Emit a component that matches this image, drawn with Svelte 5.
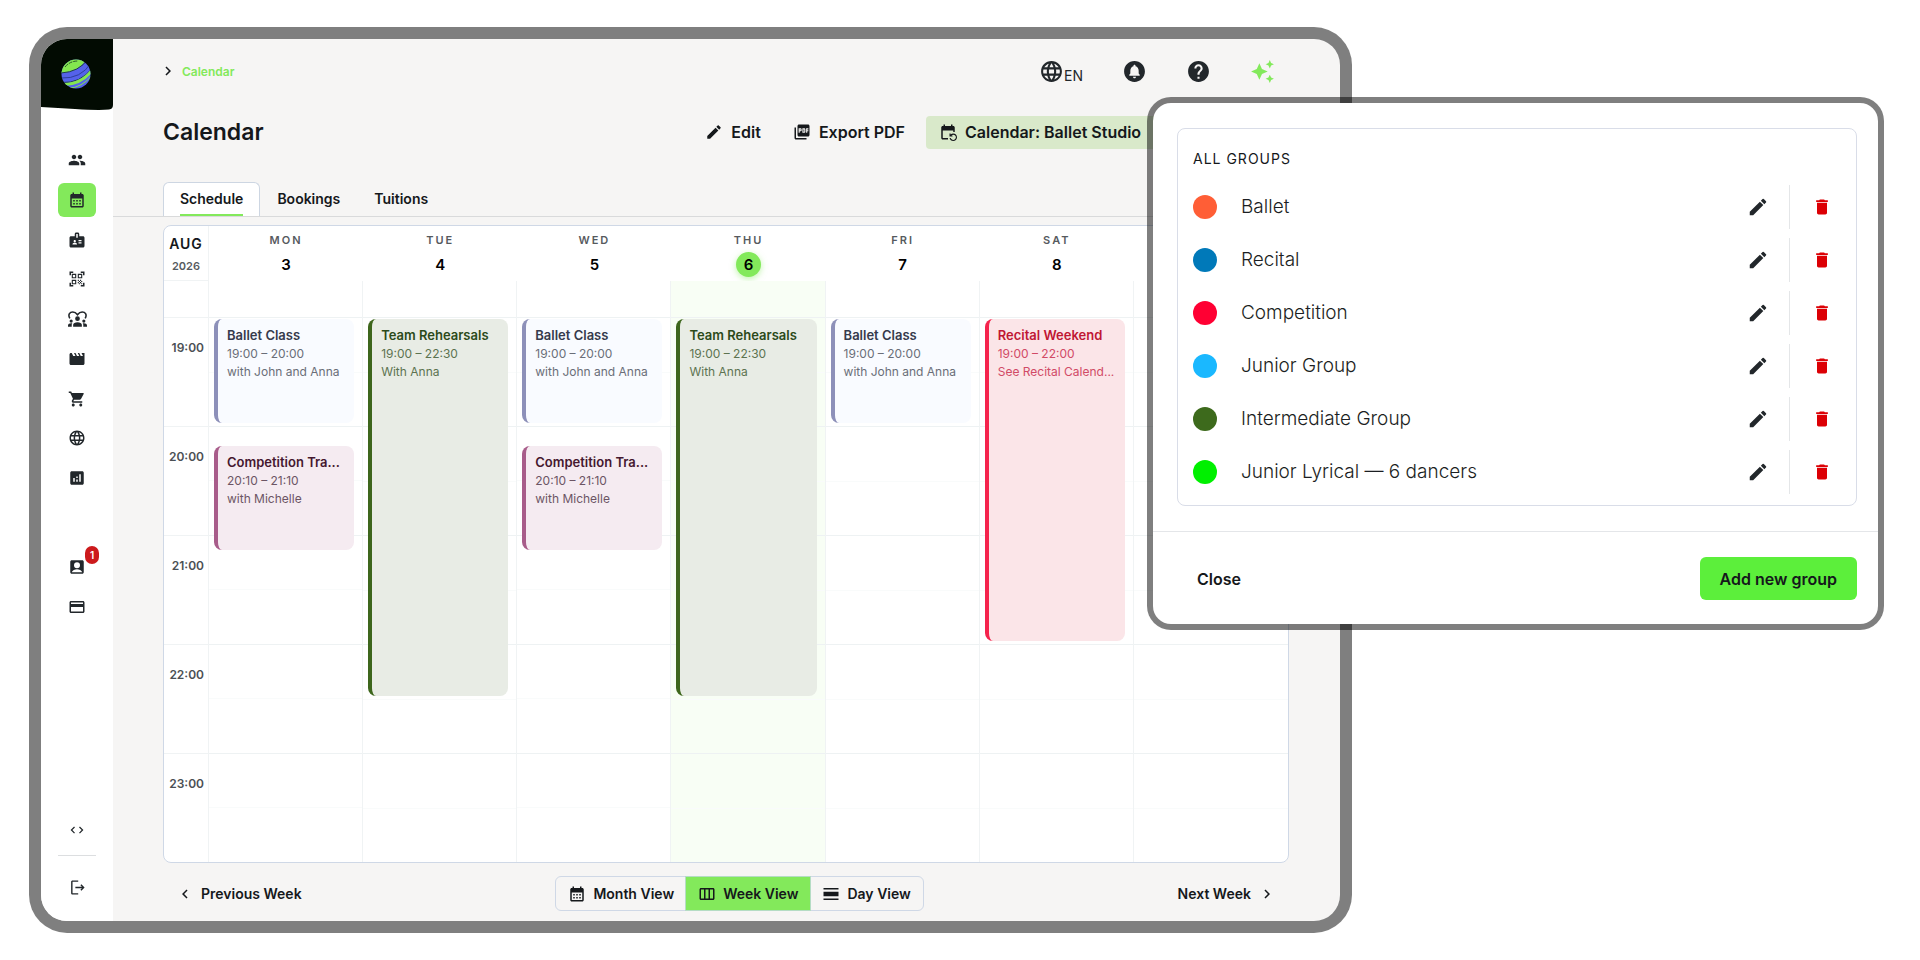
<script>
  const icons = {
    people: 'M16 11c1.66 0 2.99-1.34 2.99-3S17.66 5 16 5s-3 1.34-3 3 1.34 3 3 3zm-8 0c1.66 0 2.99-1.34 2.99-3S9.66 5 8 5 5 6.34 5 8s1.34 3 3 3zm0 2c-2.33 0-7 1.17-7 3.5V19h14v-2.5c0-2.33-4.67-3.5-7-3.5zm8 0c-.29 0-.62.02-.97.05 1.16.84 1.97 1.97 1.97 3.45V19h6v-2.5c0-2.33-4.67-3.5-7-3.5z',
    calendar: 'M19 4h-1V2h-2v2H8V2H6v2H5c-1.11 0-1.99.9-1.99 2L3 20c0 1.1.89 2 2 2h14c1.1 0 2-.9 2-2V6c0-1.1-.9-2-2-2zm0 16H5V10h14v10zM9 14H7v-2h2v2zm4 0h-2v-2h2v2zm4 0h-2v-2h2v2zm-8 4H7v-2h2v2zm4 0h-2v-2h2v2zm4 0h-2v-2h2v2z',
    badge: 'M20 7h-5V4c0-1.1-.9-2-2-2h-2c-1.1 0-2 .9-2 2v3H4c-1.1 0-2 .9-2 2v11c0 1.1.9 2 2 2h16c1.1 0 2-.9 2-2V9c0-1.1-.9-2-2-2zM9 12c.83 0 1.5.67 1.5 1.5S9.83 15 9 15s-1.5-.67-1.5-1.5S8.17 12 9 12zm3 6H6v-.75c0-1 2-1.5 3-1.5s3 .5 3 1.5V18zm1-9h-2V4h2v5zm5 7.5h-4V15h4v1.5zm0-3h-4V12h4v1.5z',
    qr: 'M9.5 6.5v3h-3v-3h3M11 5H5v6h6V5zm-1.5 9.5v3h-3v-3h3M11 13H5v6h6v-6zm6.5-6.5v3h-3v-3h3M19 5h-6v6h6V5zm-6 8h1.5v1.5H13V13zm1.5 1.5H16V16h-1.5v-1.5zM16 13h1.5v1.5H16V13zm-3 3h1.5v1.5H13V16zm1.5 1.5H16V19h-1.5v-1.5zM16 16h1.5v1.5H16V16zm1.5-1.5H19V16h-1.5v-1.5zm0 3H19V19h-1.5v-1.5zM22 7h-2V4h-3V2h5v5zm0 15v-5h-2v3h-3v2h5zM2 22h5v-2H4v-3H2v5zM2 2v5h2V4h3V2H2z',
    movie: 'M18 4l2 4h-3l-2-4h-2l2 4h-3l-2-4H8l2 4H7L5 4H4c-1.1 0-1.99.9-1.99 2L2 18c0 1.1.9 2 2 2h16c1.1 0 2-.9 2-2V4h-4z',
    cart: 'M7 18c-1.1 0-1.99.9-1.99 2S5.9 22 7 22s2-.9 2-2-.9-2-2-2zM1 2v2h2l3.6 7.59-1.35 2.45c-.16.28-.25.61-.25.96 0 1.1.9 2 2 2h12v-2H7.42c-.14 0-.25-.11-.25-.25l.03-.12.9-1.63h7.45c.75 0 1.41-.41 1.75-1.03l3.58-6.49A1.003 1.003 0 0 0 20 4H5.21l-.94-2H1zm16 16c-1.1 0-1.99.9-1.99 2s.89 2 1.99 2 2-.9 2-2-.9-2-2-2z',
    globe: 'M11.99 2C6.47 2 2 6.48 2 12s4.47 10 9.99 10C17.52 22 22 17.52 22 12S17.52 2 11.99 2zm6.93 6h-2.95c-.32-1.25-.78-2.45-1.38-3.56 1.84.63 3.37 1.91 4.33 3.56zM12 4.04c.83 1.2 1.48 2.53 1.91 3.96h-3.82c.43-1.43 1.08-2.76 1.91-3.96zM4.26 14C4.1 13.36 4 12.69 4 12s.1-1.36.26-2h3.38c-.08.66-.14 1.32-.14 2 0 .68.06 1.34.14 2H4.26zm.82 2h2.95c.32 1.25.78 2.45 1.38 3.56-1.84-.63-3.37-1.9-4.33-3.56zm2.95-8H5.08c.96-1.66 2.49-2.93 4.33-3.56C8.81 5.55 8.35 6.75 8.03 8zM12 19.96c-.83-1.2-1.48-2.53-1.91-3.96h3.82c-.43 1.43-1.08 2.76-1.91 3.96zM14.34 14H9.66c-.09-.66-.16-1.32-.16-2 0-.68.07-1.35.16-2h4.68c.09.65.16 1.32.16 2 0 .68-.07 1.34-.16 2zm.25 5.56c.6-1.11 1.06-2.31 1.38-3.56h2.95c-.96 1.65-2.49 2.93-4.33 3.56zM16.36 14c.08-.66.14-1.32.14-2 0-.68-.06-1.34-.14-2h3.38c.16.64.26 1.31.26 2s-.1 1.36-.26 2h-3.38z',
    stats: 'M19 3H5c-1.1 0-2 .9-2 2v14c0 1.1.9 2 2 2h14c1.1 0 2-.9 2-2V5c0-1.1-.9-2-2-2zM9 17H7v-5h2v5zm4 0h-2v-3h2v3zm0-5h-2v-2h2v2zm4 5h-2V7h2v10z',
    account: 'M3 5v14c0 1.1.9 2 2 2h14c1.1 0 2-.9 2-2V5c0-1.1-.9-2-2-2H5c-1.1 0-2 .9-2 2zm13 4.5a4 4 0 1 1-8 0 4 4 0 0 1 8 0zM5 19c1-2.5 4-4 7-4s6 1.5 7 4z',
    card: 'M20 4H4c-1.11 0-1.99.89-1.99 2L2 18c0 1.11.89 2 2 2h16c1.11 0 2-.89 2-2V6c0-1.11-.89-2-2-2zm0 14H4v-6h16v6zm0-10H4V6h16v2z',
    bell: 'M12 2C6.48 2 2 6.48 2 12s4.48 10 10 10 10-4.48 10-10S17.52 2 12 2zm0 16.5c-.83 0-1.5-.67-1.5-1.5h3c0 .83-.67 1.5-1.5 1.5zm5-2.5H7v-1l1-1v-2.61C8 9.27 9.03 7.47 11 7v-.5c0-.57.43-1 1-1s1 .43 1 1V7c1.97.47 3 2.28 3 4.39V14l1 1v1z',
    help: 'M12 2C6.48 2 2 6.48 2 12s4.48 10 10 10 10-4.48 10-10S17.52 2 12 2zm1 17h-2v-2h2v2zm2.07-7.75l-.9.92C13.45 12.9 13 13.5 13 15h-2v-.5c0-1.1.45-2.1 1.17-2.83l1.24-1.26c.37-.36.59-.86.59-1.41 0-1.1-.9-2-2-2s-2 .9-2 2H8c0-2.21 1.79-4 4-4s4 1.79 4 4c0 .88-.36 1.68-.93 2.25z',
    sparkle: 'M19 9l1.25-2.75L23 5l-2.75-1.25L19 1l-1.25 2.75L15 5l2.75 1.25L19 9zm-7.5.5L9 4 6.5 9.5 1 12l5.5 2.5L9 20l2.5-5.5L17 12l-5.5-2.5zM19 15l-1.25 2.75L15 19l2.75 1.25L19 23l1.25-2.75L23 19l-2.75-1.25L19 15z',
    edit: 'M3 17.25V21h3.75L17.81 9.94l-3.75-3.75L3 17.25zM20.71 7.04a1 1 0 0 0 0-1.41l-2.34-2.34a1 1 0 0 0-1.41 0l-1.83 1.83 3.75 3.75 1.83-1.83z',
    pdf: 'M20 2H8c-1.1 0-2 .9-2 2v12c0 1.1.9 2 2 2h12c1.1 0 2-.9 2-2V4c0-1.1-.9-2-2-2zm-8.5 7.5c0 .83-.67 1.5-1.5 1.5H9v2H7.5V7H10c.83 0 1.5.67 1.5 1.5v1zm5 2c0 .83-.67 1.5-1.5 1.5h-2.5V7H15c.83 0 1.5.67 1.5 1.5v3zm4-3H19v1h1.5V11H19v2h-1.5V7h3v1.5zM9 9.5h1v-1H9v1zM4 6H2v14c0 1.1.9 2 2 2h14v-2H4V6zm10 5.5h1v-3h-1v3z',
    repeat: 'M21 12V6c0-1.1-.9-2-2-2h-1V2h-2v2H8V2H6v2H5c-1.1 0-2 .9-2 2v14c0 1.1.9 2 2 2h7v-2H5V10h14v2h2zm-5.36 8c.43 1.45 1.77 2.5 3.36 2.5 1.93 0 3.5-1.57 3.5-3.5s-1.57-3.5-3.5-3.5c-.95 0-1.82.38-2.45 1H18V18h-4v-4h1.5v1.43c.9-.88 2.14-1.43 3.5-1.43 2.76 0 5 2.24 5 5s-2.24 5-5 5c-2.42 0-4.44-1.72-4.9-4h1.54z',
    trash: 'M6 19c0 1.1.9 2 2 2h8c1.1 0 2-.9 2-2V7H6v12zM19 4h-3.5l-1-1h-5l-1 1H5v2h14V4z',
    week: 'M4 4C2.9 4 2 4.9 2 6v12c0 1.1.9 2 2 2h16c1.1 0 2-.9 2-2V6c0-1.1-.9-2-2-2zM4 6h4v12H4zM10 6h4v12h-4zM16 6h4v12h-4z',
    day: 'M2 4h20v2H2zM2 9h20v6H2zM2 18h20v2H2z',
    code: 'M8.5 7.5 7 6l-6 6 6 6 1.5-1.5L4 12zM15.5 7.5 17 6l6 6-6 6-1.5-1.5L20 12z',
    logout: 'M5 2C3.9 2 3 2.9 3 4v16c0 1.1.9 2 2 2h8v-2H5V4h8V2zM17.5 7.5 16.1 8.9 18.2 11H9v2h9.2l-2.1 2.1 1.4 1.4L22 12z',
    left: 'M15.4 7.4 14 6l-6 6 6 6 1.4-1.4L10.8 12z',
    right: 'M10 6 8.6 7.4 13.2 12l-4.6 4.6L10 18l6-6z'
  };

  const nav = [
    ['Members', 'people'],
    ['Calendar', 'calendar'],
    ['Staff', 'badge'],
    ['Check-in', 'qr'],
    ['Community', 'family'],
    ['Videos', 'movie'],
    ['Shop', 'cart'],
    ['Website', 'globe'],
    ['Statistics', 'stats']
  ];

  // Slots are ten minutes long; row 1 is the strip above 19:00.
  const slot = (t) => {
    const [h, m] = t.split(':').map(Number);
    return (h - 19) * 6 + Math.round(m / 10) + 2;
  };

  const ballet = { kind: 'ballet', title: 'Ballet Class', from: '19:00', to: '20:00', note: 'with John and Anna' };
  const comp = { kind: 'comp', title: 'Competition Tra...', from: '20:10', to: '21:10', note: 'with Michelle' };
  const team = { kind: 'team', title: 'Team Rehearsals', from: '19:00', to: '22:30', note: 'With Anna' };
  const recital = { kind: 'recital', title: 'Recital Weekend', from: '19:00', to: '22:00', note: 'See Recital Calend...' };

  const days = [
    { name: 'MON', date: 3, events: [ballet, comp] },
    { name: 'TUE', date: 4, events: [team] },
    { name: 'WED', date: 5, events: [ballet, comp] },
    { name: 'THU', date: 6, today: true, events: [team] },
    { name: 'FRI', date: 7, events: [ballet] },
    { name: 'SAT', date: 8, events: [recital] },
    { name: '', date: '', events: [] }
  ];
  const hours = ['19:00', '20:00', '21:00', '22:00', '23:00'];

  const groups = [
    ['Ballet', '#ff5e36'],
    ['Recital', '#0079b9'],
    ['Competition', '#ff0033'],
    ['Junior Group', '#1ab8ff'],
    ['Intermediate Group', '#3d6a1c'],
    ['Junior Lyrical — 6 dancers', '#00f000']
  ];
</script>

{#snippet icon(name, size)}
  <svg class="icon" width={size} height={size} viewBox="0 0 24 24" aria-hidden="true">
    {#if name === 'family'}
      <path d="M2.3 10.5C-.5 5.5 2.500 2.500 6 2.500c2.500 0 4.500 1.500 6 3.500 1.500-2 3.500-3.500 6-3.500 3.500 0 6.500 3 3.700 8" fill="none" stroke="currentColor" stroke-width="2" />
      <circle cx="12" cy="11" r="3" /><circle cx="4" cy="14" r="2" /><circle cx="20" cy="14" r="2" />
      <path d="M6.5 21v-2.300c0-2 2.500-3.200 5.500-3.200s5.500 1.200 5.500 3.200V21zM0 21v-1.500c0-1.700 1.800-2.800 4-2.800.5 0 1 .1 1.400.2-.6.700-.7 1.300-.7 1.900V21zM24 21v-1.500c0-1.700-1.800-2.800-4-2.800-.5 0-1 .1-1.400.2.6.7.7 1.300.7 1.900V21z" />
    {:else}
      <path fill-rule="evenodd" d={icons[name]} />
    {/if}
  </svg>
{/snippet}

<div class="stage">
  <div class="device">
    <nav class="sidebar">
      <a class="logo" href="#home" aria-label="Home">
        <svg viewBox="0 0 72 71" width="72" height="71" aria-hidden="true">
          <defs><clipPath id="ball"><circle cx="34" cy="34" r="14.500" /></clipPath></defs>
          <path d="M0 0h72v66q0 4-4 4.500Q58 71.500 34 70L0 68z" fill="#020b02" />
          <g clip-path="url(#ball)" transform="translate(1 1)">
            <rect x="19" y="19" width="30" height="30" fill="#5562ea" />
            <path d="M18 33V18h27q-7 14-27 15z" fill="#84e64f" />
            <path d="M19 33q18-1 27-14" stroke="#1d3a4a" stroke-width="1" fill="none" />
            <path d="M19 38q20 1 30-15" stroke="#2d3f9a" stroke-width="1" fill="none" />
            <path d="M20 42.500q18 1 30-14" stroke="#1d3a4a" stroke-width="1" fill="none" />
            <path d="M22 44.500q17 0 28-14" stroke="#84e64f" stroke-width="3" fill="none" />
            <path d="M26 48.500q14-1 24-13" stroke="#84e64f" stroke-width="1" fill="none" />
            <path d="M23 27q5-6 13-6" stroke="#2b5a2b" stroke-width="1" fill="none" stroke-dasharray="4 1" />
          </g>
        </svg>
      </a>
      <div class="nav-main">
        {#each nav as [label, name]}
          <a class="nav-item" class:active={name === 'calendar'} href="#{name}" aria-label={label}>{@render icon(name, name === 'family' ? 19 : 18)}</a>
        {/each}
      </div>
      <div class="nav-extra">
        <a class="nav-item" href="#account" aria-label="Account">{@render icon('account', 18)}<span class="count">1</span></a>
        <a class="nav-item" href="#billing" aria-label="Billing">{@render icon('card', 18)}</a>
      </div>
      <a class="nav-item code" href="#embed" aria-label="Embed">{@render icon('code', 14)}</a>
      <hr />
      <button class="nav-item" aria-label="Log out">{@render icon('logout', 17)}</button>
    </nav>

    <main>
      <header class="topbar">
        <div class="crumb">{@render icon('right', 18)}<a href="#calendar">Calendar</a></div>
        <div class="tools">
          <button class="lang">{@render icon('globe', 25)}<span>EN</span></button>
          <button aria-label="Notifications">{@render icon('bell', 25)}</button>
          <button aria-label="Help">{@render icon('help', 25)}</button>
          <button class="spark" aria-label="Assistant">{@render icon('sparkle', 25)}</button>
        </div>
      </header>

      <div class="heading">
        <h1>Calendar</h1>
        <button>{@render icon('edit', 18)}Edit</button>
        <button>{@render icon('pdf', 18)}Export PDF</button>
        <button class="picker">{@render icon('repeat', 18)}Calendar: Ballet Studio</button>
      </div>

      <div class="tabs">
        <button class="tab selected"><span>Schedule</span></button>
        <button class="tab"><span>Bookings</span></button>
        <button class="tab"><span>Tuitions</span></button>
      </div>

      <section class="week">
        <div class="times">
          <div class="month"><b>AUG</b><span>2026</span></div>
          <div class="slots">
            {#each hours as h}
              <div class="hour" style="grid-row: {slot(h)} / span 6">{h}</div>
            {/each}
          </div>
        </div>
        {#each days as d}
          <div class="day" class:today={d.today}>
            <div class="day-head"><span>{d.name}</span><b>{d.date}</b></div>
            <div class="slots">
              {#each hours as h}
                <div class="cell" style="grid-row: {slot(h)} / span 6"></div>
              {/each}
              {#each d.events as e}
                <article class="event {e.kind}" style="grid-row: {slot(e.from)} / {slot(e.to)}">
                  <h3>{e.title}</h3>
                  <p>{e.from} – {e.to}</p>
                  <p>{e.note}</p>
                </article>
              {/each}
            </div>
          </div>
        {/each}
      </section>

      <footer class="pager">
        <button>{@render icon('left', 18)}Previous Week</button>
        <div class="views">
          <button>{@render icon('calendar', 18)}Month View</button>
          <button class="on">{@render icon('week', 18)}Week View</button>
          <button>{@render icon('day', 18)}Day View</button>
        </div>
        <button>Next Week{@render icon('right', 18)}</button>
      </footer>
    </main>
  </div>

  <section class="dialog" aria-labelledby="groups-title">
    <div class="groups">
      <h2 id="groups-title">ALL GROUPS</h2>
      <ul>
        {#each groups as [name, color]}
          <li>
            <i style="background: {color}"></i>
            <span>{name}</span>
            <button class="pen" aria-label="Edit {name}">{@render icon('edit', 22)}</button>
            <button class="bin" aria-label="Delete {name}">{@render icon('trash', 20)}</button>
          </li>
        {/each}
      </ul>
    </div>
    <div class="actions">
      <button class="close">Close</button>
      <button class="add">Add new group</button>
    </div>
  </section>
</div>

<style>
  :global(body) { background: #fff; }
  * { box-sizing: border-box; }
  .stage {
    display: grid;
    grid-template-columns: 29px 1118fr 205fr 532fr 36px;
    padding: 27px 0 28px;
    font-family: Inter, "Liberation Sans", sans-serif;
    color: #15181b;
  }
  h1, h2, h3, p, ul { margin: 0; padding: 0; }
  button { font: inherit; color: inherit; background: none; border: 0; padding: 0; cursor: pointer; }
  a { color: inherit; text-decoration: none; }
  .icon { display: block; flex: none; fill: currentColor; }

  .device {
    grid-area: 1 / 2 / 2 / 4;
    display: flex;
    border: 12px solid rgba(0, 0, 0, 0.5);
    border-radius: 38px;
    background: #f6f5f4;
    background-clip: padding-box;
    overflow: hidden;
  }
  .sidebar {
    width: 72px;
    flex: none;
    display: flex;
    flex-direction: column;
    align-items: center;
    padding-bottom: 17px;
    background: #fff;
    color: #22272b;
  }
  .logo { display: block; height: 71px; margin-bottom: 33px; }
  .logo svg { display: block; }
  .nav-main { display: flex; flex-direction: column; justify-content: space-between; height: 352px; margin-bottom: 55px; }
  .nav-extra { display: flex; flex-direction: column; gap: 6px; flex: 1; }
  .nav-item { position: relative; display: flex; align-items: center; justify-content: center; width: 38px; height: 34px; border-radius: 6px; }
  .nav-item.active { background: #83e95b; }
  .count {
    position: absolute; top: -4px; right: -3px;
    width: 14px; height: 18px; border-radius: 7px;
    background: #cc1a1c; color: #fff;
    font-size: 10px; font-weight: 600; line-height: 18px; text-align: center;
  }
  .sidebar hr { width: 38px; height: 1px; margin: 8px 0 14px; border: 0; background: #dcdee0; }

  main { flex: 1; min-width: 0; display: flex; flex-direction: column; }
  .topbar { display: flex; align-items: center; justify-content: space-between; height: 64px; padding: 0 65px 0 46px; }
  .crumb { display: flex; align-items: center; gap: 5px; font-size: 12px; font-weight: 600; }
  .crumb a { color: #83e95b; }
  .tools { display: flex; align-items: center; gap: 39px; color: #22272b; }
  .lang { display: flex; align-items: center; font-size: 14px; }
  .lang span { padding-top: 8px; }
  .spark { color: #83e95b; }
  .heading { display: flex; align-items: center; height: 58px; margin-bottom: 21px; padding: 0 51px 0 50px; }
  .heading h1 { flex: 1; font-size: 23px; font-weight: 600; }
  .heading button { display: flex; align-items: center; gap: 8px; height: 33px; font-size: 16px; font-weight: 600; white-space: nowrap; }
  .heading button + button { margin-left: 32px; }
  .heading button + .picker { width: 363px; margin-left: 21px; padding-left: 13px; border-radius: 4px; background: #d9e9ca; }
  .tabs { display: flex; height: 35px; margin-bottom: 8px; padding-left: 50px; border-bottom: 1px solid #d9dadb; }
  .tab { padding: 0 16px; font-size: 14px; font-weight: 600; border: 1px solid transparent; border-bottom: 0; }
  .tab span { display: flex; align-items: center; height: 100%; border-bottom: 2px solid transparent; }
  .tab.selected { background: #fff; border-color: #cdd6e2; border-radius: 6px 6px 0 0; }
  .tab.selected span { border-color: #83e95b; }

  .week {
    display: grid;
    grid-template-columns: 45px repeat(7, 1fr);
    margin: 0 51px 0 50px;
    border: 1px solid #cfd8e6;
    border-radius: 8px;
    background: #fff;
    overflow: hidden;
  }
  .times, .day { display: flex; flex-direction: column; min-width: 0; }
  .times { border-right: 1px solid #f0f3f4; text-align: right; }
  .month, .day-head { display: flex; flex-direction: column; align-items: center; height: 55px; }
  .month { padding-top: 8px; border-bottom: 1px solid #f0f3f4; }
  .month b { font-size: 14px; line-height: 20px; font-weight: 600; letter-spacing: 1px; }
  .month span { font-size: 11px; line-height: 24px; font-weight: 600; color: #565a5e; }
  .day-head { padding-top: 4px; }
  .day-head span { height: 20px; font-size: 11px; line-height: 20px; font-weight: 600; letter-spacing: 2px; color: #565a5e; }
  .day-head b { width: 25px; height: 25px; margin-top: 2px; border-radius: 50%; font-size: 15px; line-height: 25px; font-weight: 600; text-align: center; color: #000; }
  .today .day-head b { background: #83e95b; box-shadow: 0 2px 6px rgba(131, 233, 91, 0.5); }
  .slots { display: grid; grid-template-columns: 100%; grid-template-rows: 36px repeat(30, 1fr); height: 581px; }
  .hour { padding: 20px 4px 0 0; border-top: 1px solid #f0f3f4; font-size: 12px; line-height: 20px; font-weight: 600; color: #4b5054; }
  .day .slots { border-right: 1px solid #f0f3f4; }
  .day:last-child .slots { border-right: 0; }
  .today .slots { background: #f8fef5; }
  .cell { grid-column: 1; border-top: 1px solid #eef2f3; background: linear-gradient(#f9fbfb, #f9fbfb) center / 100% 1px no-repeat; }
  .event {
    grid-column: 1;
    margin: 2px 8px 3px 5px;
    padding: 7px 9px 0 9px;
    border-left: 4px solid;
    border-radius: 8px;
    white-space: nowrap;
    overflow: hidden;
    font-size: 12px;
    line-height: 18px;
  }
  .event h3 { font-size: 13px; line-height: 19px; font-weight: 600; }
  .ballet { background: #f9fbff; border-color: #8d90b9; color: #6a6e78; }
  .ballet h3 { color: #363a4c; }
  .comp { background: #f5ebf1; border-color: #a85c8a; color: #6c5564; }
  .comp h3 { color: #45182f; }
  .team { background: #e8ece5; border-color: #3d661c; color: #5c7350; }
  .team h3 { color: #2c4a1a; }
  .recital { background: #fbe5e8; border-color: #f5234c; color: #d14a66; }
  .recital h3 { color: #c01733; }

  .pager { display: flex; align-items: center; justify-content: space-between; padding: 13px 51px 10px 50px; font-size: 14px; font-weight: 600; }
  .pager button { display: flex; align-items: center; gap: 7px; padding: 0 13px; white-space: nowrap; }
  .views { display: flex; height: 35px; border: 1px solid #cfd8e6; border-radius: 6px; }
  .views button { padding: 0 12px; }
  .views .on { background: #83e95b; box-shadow: 0 0 0 1px #b5dcc4; }

  .dialog {
    grid-area: 1 / 3 / 2 / 5;
    align-self: start;
    position: relative;
    margin-top: 70px;
    border: 6px solid rgba(0, 0, 0, 0.5);
    border-radius: 24px;
    background: #fff;
    background-clip: padding-box;
  }
  .groups { margin: 25px 21px 25px 24px; padding: 20px 15px 7px; border: 1px solid #d9dde8; border-radius: 8px; }
  .groups h2 { font-size: 14px; line-height: 20px; font-weight: 400; letter-spacing: 1px; margin-bottom: 11px; }
  .groups ul { list-style: none; }
  .groups li { display: flex; align-items: center; height: 53px; font-size: 19px; font-weight: 300; color: #1b1e22; }
  .groups i { width: 24px; height: 24px; margin-right: 24px; border-radius: 50%; }
  .groups li span { flex: 1; }
  .groups li button { display: flex; align-items: center; justify-content: center; height: 44px; }
  .pen { width: 62px; color: #22272b; }
  .bin { width: 52px; padding-left: 12px; border-left: 1px solid #e4e6e8; color: #dc0005; }
  .actions { display: flex; align-items: center; justify-content: space-between; padding: 25px 21px 24px 44px; border-top: 1px solid #e4e6e9; font-size: 16px; font-weight: 600; }
  .add { height: 43px; padding: 0 20px; border-radius: 6px; background: #5cef3b; }
</style>
